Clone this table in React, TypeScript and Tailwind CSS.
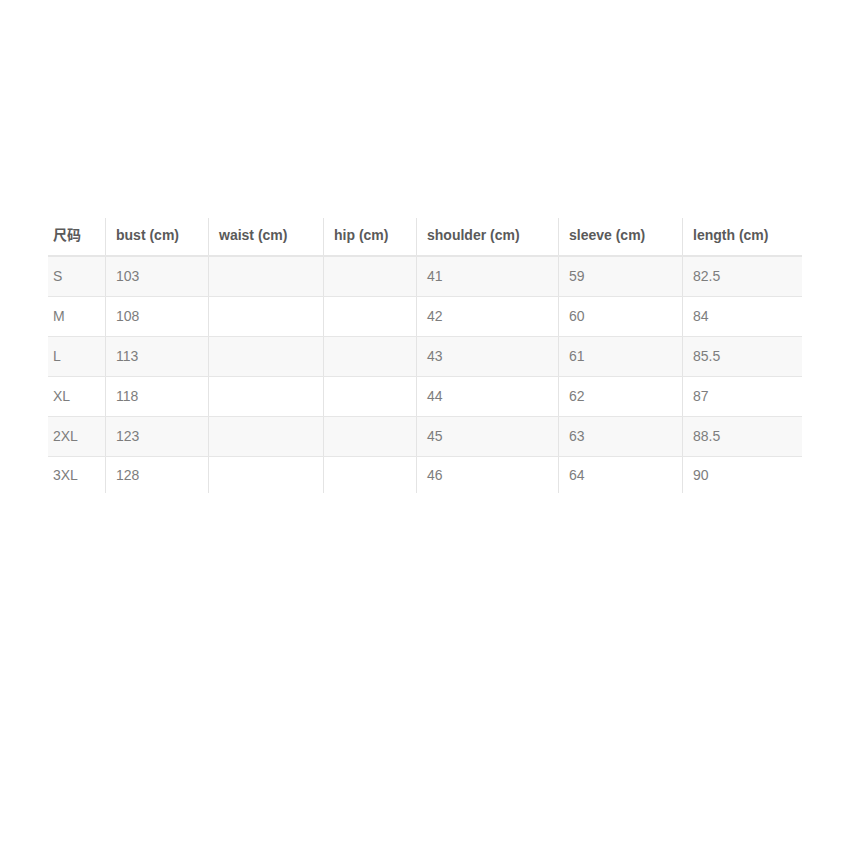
import React from 'react';

const columns = [
  { label: '尺码', width: 'w-[57px]' },
  { label: 'bust (cm)', width: 'w-[103px]' },
  { label: 'waist (cm)', width: 'w-[115px]' },
  { label: 'hip (cm)', width: 'w-[93px]' },
  { label: 'shoulder (cm)', width: 'w-[142px]' },
  { label: 'sleeve (cm)', width: 'w-[124px]' },
  { label: 'length (cm)', width: 'w-[120px]' },
];

const rows = [
  ['S', '103', '', '', '41', '59', '82.5'],
  ['M', '108', '', '', '42', '60', '84'],
  ['L', '113', '', '', '43', '61', '85.5'],
  ['XL', '118', '', '', '44', '62', '87'],
  ['2XL', '123', '', '', '45', '63', '88.5'],
  ['3XL', '128', '', '', '46', '64', '90'],
];

const SizeChart = () => {
  return (
    <div className="min-h-[850px] w-[850px] bg-white pt-[218px] pl-[48px] font-['Liberation_Sans','Noto_Sans_CJK_SC',sans-serif]">
      <div className="w-[754px]">
        {/* Header */}
        <div className="flex h-[39px] border-b-2 border-[#e6e6e6]">
          {columns.map((col, i) => (
            <div
              key={col.label}
              className={`${col.width} flex items-center pb-[2px] text-[14px] font-bold text-[#5a5a5a] ${
                i === 0 ? 'pl-[5px]' : 'pl-[10px] border-l border-[#e4e4e4]'
              }`}
            >
              {col.label}
            </div>
          ))}
        </div>

        {/* Body */}
        {rows.map((row, r) => (
          <div
            key={row[0]}
            className={`flex ${r === rows.length - 1 ? 'h-[36px]' : 'h-[40px] border-b border-[#e6e6e6]'} ${
              r % 2 === 0 ? 'bg-[#f8f8f8]' : 'bg-white'
            }`}
          >
            {row.map((cell, i) => (
              <div
                key={i}
                className={`${columns[i].width} flex items-center text-[14px] text-[#7d7d7d] ${
                  i === 0 ? 'pl-[5px]' : 'pl-[10px] border-l border-[#e4e4e4]'
                }`}
              >
                {cell}
              </div>
            ))}
          </div>
        ))}
      </div>
    </div>
  );
};

export default SizeChart;
